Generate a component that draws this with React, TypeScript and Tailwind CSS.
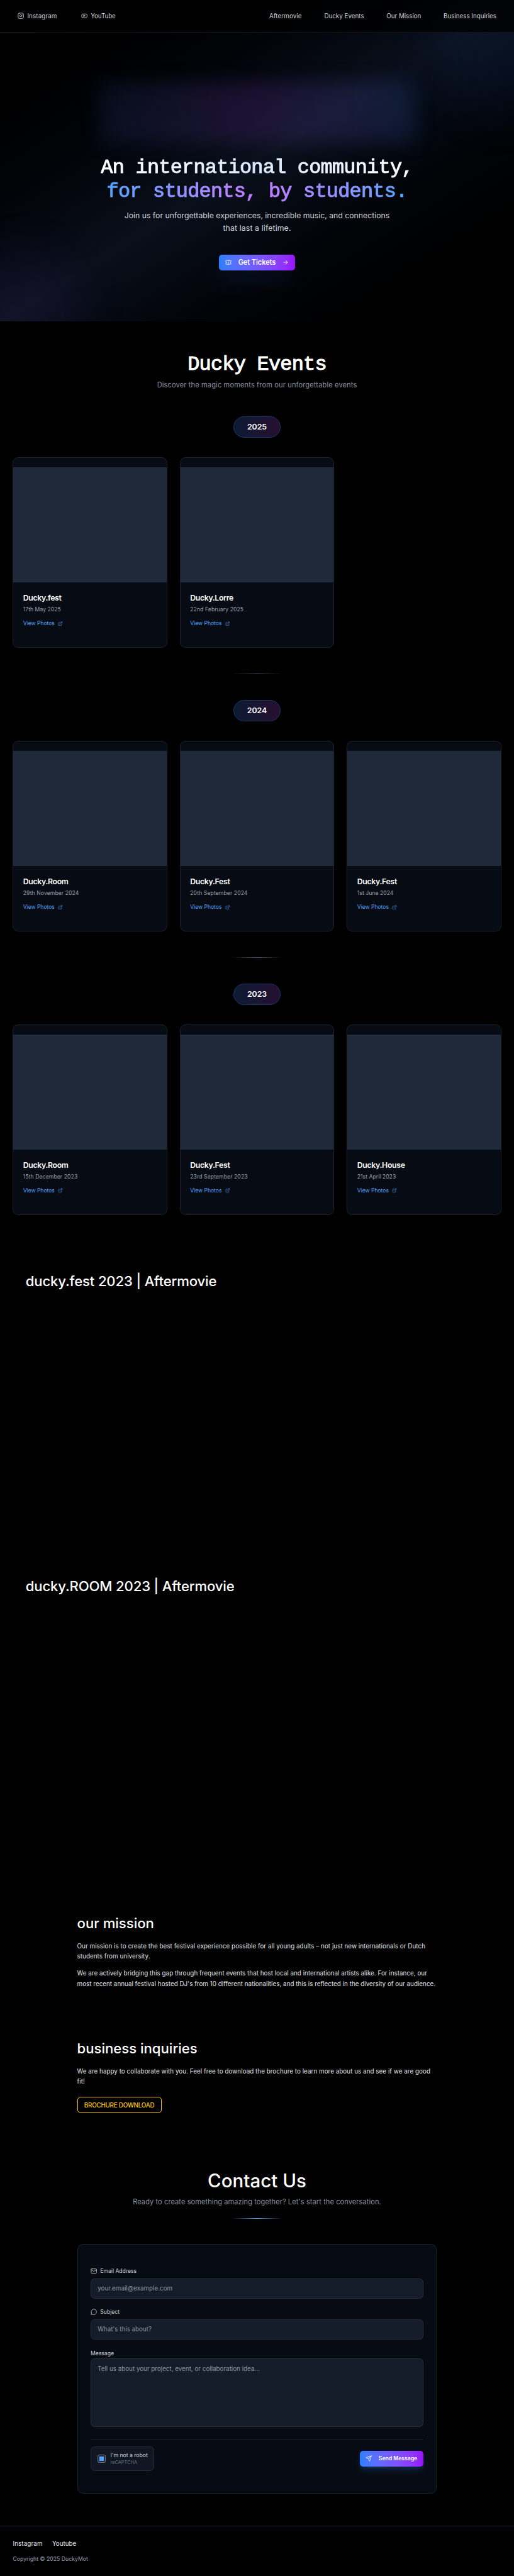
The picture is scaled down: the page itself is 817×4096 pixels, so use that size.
import type { ReactNode } from "react";
import { ArrowRight, ExternalLink, Instagram, Mail, MessageCircle, Send, Ticket, Youtube } from "lucide-react";

type Event = { title: string; titleTracking: string; date: string; dateTracking: string };
type Year = { year: string; events: Event[] };

const years: Year[] = [
  {
    year: "2025",
    events: [
      { title: "Ducky.fest", titleTracking: "tracking-[-0.5px]", date: "17th May 2025", dateTracking: "tracking-[0.05px]" },
      { title: "Ducky.Lorre", titleTracking: "tracking-[-0.55px]", date: "22nd February 2025", dateTracking: "tracking-[0.14px]" },
    ],
  },
  {
    year: "2024",
    events: [
      { title: "Ducky.Room", titleTracking: "tracking-[-0.5px]", date: "29th November 2024", dateTracking: "tracking-[0.14px]" },
      { title: "Ducky.Fest", titleTracking: "tracking-[-0.5px]", date: "20th September 2024", dateTracking: "tracking-[0.14px]" },
      { title: "Ducky.Fest", titleTracking: "tracking-[-0.5px]", date: "1st June 2024", dateTracking: "tracking-[0.05px]" },
    ],
  },
  {
    year: "2023",
    events: [
      { title: "Ducky.Room", titleTracking: "tracking-[-0.5px]", date: "15th December 2023", dateTracking: "tracking-[0.14px]" },
      { title: "Ducky.Fest", titleTracking: "tracking-[-0.5px]", date: "23rd September 2023", dateTracking: "tracking-[0.14px]" },
      { title: "Ducky.House", titleTracking: "tracking-[-0.5px]", date: "21st April 2023", dateTracking: "tracking-[0.05px]" },
    ],
  },
];

function Header() {
  return (
    <header className="relative z-10 flex h-[81px] shrink-0 items-center justify-between border-b border-[#12171f] bg-black/80 px-11 text-[15.4px] leading-6 text-[#d1d5dc]">
      <nav className="flex">
        <a className="flex w-[158px] items-center gap-2 tracking-[0.17px]">
          <Instagram size={16} />
          Instagram
        </a>
        <a className="flex items-center gap-2 tracking-[-0.16px]">
          <Youtube size={16} />
          YouTube
        </a>
      </nav>
      <nav className="flex gap-14">
        <a className="tracking-[0.15px]">Aftermovie</a>
        <a>Ducky Events</a>
        <a className="tracking-[-0.05px]">Our Mission</a>
        <a className="tracking-[-0.03px]">Business Inquiries</a>
      </nav>
    </header>
  );
}

function Hero() {
  return (
    <section className="relative -mt-[81px] flex h-[801px] shrink-0 flex-col items-center overflow-hidden bg-linear-to-br from-black via-[#0a101b] to-black">
      <div className="absolute -top-10 -right-[120px] size-80 rounded-full bg-blue-500/6 blur-3xl" />
      <div className="absolute -bottom-[150px] -left-[120px] size-80 rounded-full bg-purple-500/6 blur-3xl" />
      <div className="mt-[204px] h-[152px] w-[792px] shrink-0 bg-linear-to-r from-blue-500/10 via-purple-500/14 to-blue-500/14 blur-xl" />
      <h1 className="relative mt-8 text-center font-['Liberation_Mono',monospace] text-[50px] leading-[60px] tracking-[-1.2px] [-webkit-text-stroke:1.6px_transparent]">
        <span className="block bg-linear-to-r from-white via-blue-100 to-white bg-clip-text text-transparent">
          An international community,
        </span>
        <span className="mx-auto block w-fit bg-linear-to-r from-blue-400 via-purple-400 to-blue-400 bg-clip-text text-transparent">
          for students, by students.
        </span>
      </h1>
      <p className="relative mt-[13px] text-center text-[19.25px] leading-8 text-[#d1d5dc]">
        Join us for unforgettable experiences, incredible music, and connections
        <br />
        <span className="tracking-[0.2px]">that last a lifetime.</span>
      </p>
      <button className="relative mt-[49px] flex h-10 w-[190px] items-center justify-center gap-4 rounded-lg bg-linear-to-r from-[#2b7fff] to-[#9810fa] text-[17.3px] font-semibold tracking-[-0.12px] text-white shadow-2xl shadow-blue-500/25">
        <Ticket size={16} />
        Get Tickets
        <ArrowRight size={16} />
      </button>
    </section>
  );
}

function EventCard({ event }: { event: Event }) {
  return (
    <article className="h-[475.5px] overflow-hidden rounded-[14px] border border-[#1b232e] bg-[#070b13] pt-6">
      <div className="h-[286.5px] bg-[#1e2939]" />
      <div className="px-6 pt-[25px]">
        <h3 className={"text-[19.25px] leading-7 font-semibold text-white " + event.titleTracking}>{event.title}</h3>
        <p className={"mt-[5px] text-[13.5px] leading-5 text-[#99a1af] " + event.dateTracking}>{event.date}</p>
        <a className="mt-[14.5px] flex items-center gap-2 text-[13.5px] leading-5 tracking-[-0.06px] text-[#51a2ff]">
          View Photos
          <ExternalLink size={12} />
        </a>
      </div>
    </article>
  );
}

function Divider() {
  return <div className="mx-auto my-16 h-px w-32 bg-linear-to-r from-transparent via-[#4a5565] to-transparent" />;
}

function Events() {
  return (
    <section className="h-[2370.4px] shrink-0 px-8 pt-[78px]">
      <h2 className="text-center font-['Liberation_Mono',monospace] text-[50px] leading-[60px] tracking-[-1.2px] text-white [-webkit-text-stroke:1.6px_white]">
        Ducky Events
      </h2>
      <p className="mt-[6.7px] mb-[63.3px] text-center text-[17.3px] leading-7 tracking-[0.23px] text-[#8b92a0]">
        Discover the magic moments from our unforgettable events
      </p>
      {years.map((y, i) => (
        <div key={y.year}>
          {i > 0 && <Divider />}
          <div className="mx-auto flex h-[54px] w-[116px] items-center justify-center rounded-full border border-[#1c3768] bg-linear-to-r from-[#0a1a33] to-[#260f31] text-[19.25px] leading-7 font-semibold text-white">
            {y.year}
          </div>
          <div className="mt-12 grid grid-cols-3 gap-8">
            {y.events.map((e) => (
              <EventCard key={e.date} event={e} />
            ))}
          </div>
        </div>
      ))}
    </section>
  );
}

function Aftermovie({ children }: { children: ReactNode }) {
  return (
    <section className="h-[760px] shrink-0 px-16">
      <h2 className="pt-px text-[34.65px] leading-10 font-medium tracking-[-0.24px] text-white">{children}</h2>
    </section>
  );
}

function Mission() {
  return (
    <section className="mt-[79.6px] h-[312px] shrink-0 px-48 text-[15.4px] leading-[26px] text-[#e5e7eb]">
      <h2 className="pt-px text-[34.65px] leading-10 font-medium text-white">our mission</h2>
      <p className="mt-[22.6px] tracking-[0.08px] whitespace-nowrap">
        Our mission is to create the best festival experience possible for all young adults – not just new internationals or Dutch
        <br />
        students from university.
      </p>
      <p className="mt-4 tracking-[0.045px] whitespace-nowrap">
        We are actively bridging this gap through frequent events that host local and international artists alike. For instance, our
        <br />
        most recent annual festival hosted DJ's from 10 different nationalities, and this is reflected in the diversity of our audience.
      </p>
    </section>
  );
}

function Business() {
  return (
    <section className="h-[319.7px] shrink-0 px-48 text-[15.4px] leading-[26px] text-[#e5e7eb]">
      <h2 className="pt-px text-[34.65px] leading-10 font-medium text-white">business inquiries</h2>
      <p className="mt-[22.4px] tracking-[0.07px] whitespace-nowrap">
        We are happy to collaborate with you. Feel free to download the brochure to learn more about us and see if we are good
        <br />
        fit!
      </p>
      <button className="mt-[24.5px] flex h-[42px] w-[210px] items-center justify-center rounded-lg border border-[#fdc700] font-medium tracking-[-0.35px] text-[#fdc700]">
        BROCHURE DOWNLOAD
      </button>
    </section>
  );
}

function Field({ label, icon, placeholder }: { label: string; icon: ReactNode; placeholder: string }) {
  return (
    <div className="mb-6">
      <label className="flex items-center gap-2 text-[13.5px] leading-5 text-[#d1d5dc]">
        {icon}
        {label}
      </label>
      <div className="mt-2 flex h-[50px] items-center rounded-[10px] border border-[#28323f] bg-[#141c29] px-4 text-[15.4px] text-[#8f96a3]">
        {placeholder}
      </div>
    </div>
  );
}

function Contact() {
  return (
    <section className="h-[889px] shrink-0 px-48">
      <h2 className="text-center text-[46.2px] leading-[60px] font-medium tracking-[0.05px] text-white">Contact Us</h2>
      <p className="mt-[10.5px] text-center text-[17.3px] leading-7 tracking-[0.14px] text-[#8b92a0]">
        Ready to create something amazing together? Let's start the conversation.
      </p>
      <div className="mx-auto mt-6 h-[1.6px] w-32 bg-linear-to-r from-transparent via-[#51a2ff] to-transparent" />
      <div className="mt-[62.9px] h-[622px] rounded-[14px] border border-[#1b232e] bg-[#070b13] px-8 pt-[56.5px]">
        <Field label="Email Address" icon={<Mail size={16} />} placeholder="your.email@example.com" />
        <Field label="Subject" icon={<MessageCircle size={16} />} placeholder="What's this about?" />
        <p className="mt-[25px] text-[13.5px] leading-5 text-[#d1d5dc]">Message</p>
        <div className="mt-[3px] h-[170px] rounded-[10px] border border-[#28323f] bg-[#141c29] px-4 py-3 text-[15.4px] leading-6 text-[#8f96a3]">
          Tell us about your project, event, or collaboration idea...
        </div>
        <div className="mt-[31px] flex items-center justify-between border-t border-[#1b232e] pt-4">
          <div className="flex h-[62px] w-[159px] items-center gap-3 rounded-[10px] border border-[#252c38] bg-[#101622] pl-4">
            <div className="flex size-5 shrink-0 items-center justify-center rounded border border-[#6a7282] bg-[#1e2939]">
              <div className="size-2.5 bg-[#51a2ff]" />
            </div>
            <div className="whitespace-nowrap">
              <div className="text-[13.5px] leading-[19px] text-[#d1d5dc]">I'm not a robot</div>
              <div className="text-[11.55px] leading-4 text-[#6a7282]">reCAPTCHA</div>
            </div>
          </div>
          <button className="flex h-10 w-[159px] items-center justify-center gap-4 rounded-lg bg-linear-to-r from-[#2b7fff] to-[#9810fa] text-[13.5px] font-semibold text-white shadow-lg shadow-blue-500/25">
            <Send size={16} />
            Send Message
          </button>
        </div>
      </div>
    </section>
  );
}

function Footer() {
  return (
    <footer className="flex-1 border-t border-[#1e2939] px-8 pt-[31.5px]">
      <div className="flex gap-6 text-[15.4px] leading-6 text-[#e5e7eb]">
        <a className="tracking-[0.17px]">Instagram</a>
        <a>Youtube</a>
      </div>
      <p className="mt-[17.4px] text-[13.5px] leading-5 tracking-[0.1px] text-[#99a1af]">Copyright © 2025 DuckyMot</p>
    </footer>
  );
}

export default function App() {
  return (
    <div className="flex h-[6417px] w-[1280px] flex-col overflow-hidden bg-black font-['Inter',sans-serif] [zoom:0.6383]">
      <Header />
      <Hero />
      <Events />
      <Aftermovie>ducky.fest 2023 | Aftermovie</Aftermovie>
      <Aftermovie>ducky.ROOM 2023 | Aftermovie</Aftermovie>
      <Mission />
      <Business />
      <Contact />
      <Footer />
    </div>
  );
}
